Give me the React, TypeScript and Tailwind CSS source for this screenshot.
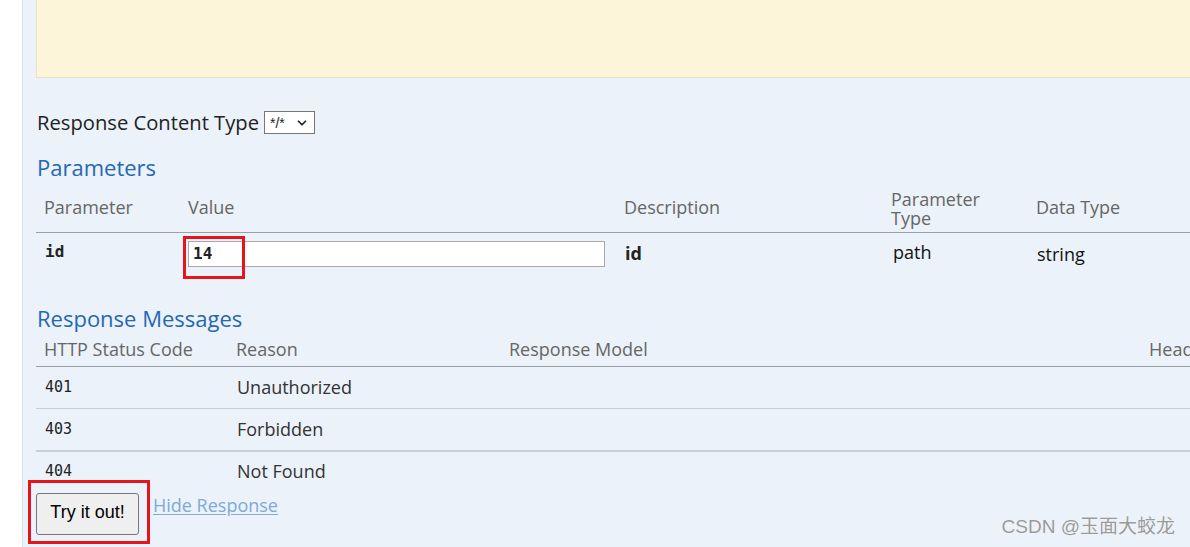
import { ChevronDown } from "lucide-react";

const sans = { fontFamily: '"Open Sans", "Noto Sans", sans-serif' };

function RedBox({ className }: { className: string }) {
  return <div className={`pointer-events-none absolute border-[3px] border-[#e8141b] ${className}`} />;
}

export default function App() {
  const responses = [
    { code: "401", reason: "Unauthorized", border: "h-[42px] border-b border-[#c6cdd4]" },
    { code: "403", reason: "Forbidden", border: "h-[43px] border-b-2 border-[#c6cdd4]" },
    { code: "404", reason: "Not Found", border: "h-[38px]" },
  ];

  return (
    <div className="relative flex h-[547px] w-[1190px] overflow-hidden bg-white text-[#222]" style={sans}>
      <div className="w-[22px] shrink-0 bg-white" />
      <div className="min-w-0 flex-1 border-l border-[#d5e0ea] bg-[#ebf2f9] pl-[13px]">
        {/* yellow description box */}
        <div className="-mr-4 h-[78px] border-b border-l border-[#e9e2c4] bg-[#fcf5da]" />

        <div className="mt-[33px] flex h-[23px] items-center gap-[5px] text-[20.2px] leading-none">
          <span className="pl-px">Response Content Type</span>
          <div className="flex h-[23px] w-[51px] items-center justify-between border border-[#767676] bg-white pl-[5px] pr-[5px] text-[14px]" style={{ fontFamily: '"Liberation Sans", sans-serif' }}>
            <span>*/*</span>
            <ChevronDown size={14} strokeWidth={3} />
          </div>
        </div>

        <h2 className="mt-[19px] h-[28px] pl-px text-[22px] leading-[28px] text-[#2568b3]">Parameters</h2>

        {/* parameters table */}
        <div className="mt-[7px] w-[1250px]">
          <div className="grid h-[45px] grid-cols-[144px_436px_267px_145px_1fr] items-center border-b border-[#9a9fa5] text-[18px] text-[#666]">
            <div className="pb-[5px] pl-2">Parameter</div>
            <div className="pb-[5px] pl-2">Value</div>
            <div className="pb-[5px] pl-2">Description</div>
            <div className="pb-[3px] pl-2 leading-[19px]">Parameter<br />Type</div>
            <div className="pb-[5px] pl-2">Data Type</div>
          </div>
          <div className="grid h-[60px] grid-cols-[144px_436px_267px_145px_1fr] items-start text-[18px]">
            <div className="pl-[9px] pt-[8px] text-[16px] font-bold leading-[22px]" style={{ fontFamily: '"DejaVu Sans Mono", monospace' }}>id</div>
            <div className="relative pl-2 pt-[8px]">
              <div className="flex h-[26px] w-[417px] items-center border border-[#a9a9a9] bg-white pl-[4px] text-[16px] font-bold" style={{ fontFamily: '"DejaVu Sans Mono", monospace' }}>14</div>
              <RedBox className="left-[3px] top-[3px] h-[43px] w-[62px]" />
            </div>
            <div className="pl-[9px] pt-[8px] font-bold leading-[24px]">id</div>
            <div className="pl-[10px] pt-[7px] leading-[24px] text-[#111]">path</div>
            <div className="pl-[9px] pt-[9px] leading-[24px] text-[#111]">string</div>
          </div>
        </div>

        <h2 className="mt-[11px] h-[28px] pl-px text-[22px] leading-[28px] text-[#2568b3]">Response Messages</h2>

        {/* response messages table */}
        <div className="w-[1250px]">
          <div className="grid h-[35px] grid-cols-[192px_273px_640px_1fr] items-center border-b border-[#9a9fa5] text-[18px] text-[#666]">
            <div className="pl-2">HTTP Status Code</div>
            <div className="pl-2">Reason</div>
            <div className="pl-2">Response Model</div>
            <div className="pl-2">Headers</div>
          </div>
          {responses.map((r) => (
            <div key={r.code} className={`grid grid-cols-[192px_273px_640px_1fr] items-center text-[18px] ${r.border}`}>
              <div className="pl-[9px] text-[15px]" style={{ fontFamily: '"DejaVu Sans Mono", monospace' }}>{r.code}</div>
              <div className="pl-[9px] text-[#333]">{r.reason}</div>
              <div />
              <div />
            </div>
          ))}
        </div>

        <div className="mt-[3px] flex items-start">
          <div className="relative">
            <button className="h-[42px] w-[103px] rounded-[3px] border border-[#767676] bg-[#efefef] pb-[3px] text-[18px] text-black" style={{ fontFamily: '"Liberation Sans", Arial, sans-serif' }}>
              Try it out!
            </button>
            <RedBox className="-left-[8px] -top-[13px] h-[64px] w-[122px]" />
          </div>
          <a href="#" className="ml-[14px] mt-0 text-[18px] leading-[24px] text-[#7ea9da] underline underline-offset-2">Hide Response</a>
        </div>
      </div>

      <div className="pointer-events-none absolute bottom-[8px] right-[15px] text-[19px] leading-[24px] text-[#9a9a9a]" style={{ fontFamily: '"Liberation Sans", "Noto Sans CJK SC", sans-serif', textShadow: "0 0 1px #fff" }}>
        CSDN @玉面大蛟龙
      </div>
    </div>
  );
}
